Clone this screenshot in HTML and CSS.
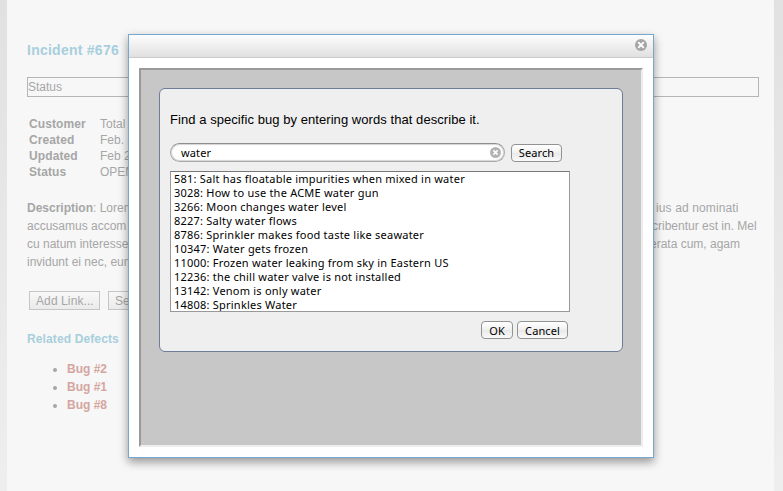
FILE: index.html
```
<!DOCTYPE html>
<html lang="en">
<head>
<meta charset="utf-8">
<title>Incident #676</title>
<link rel="stylesheet" href="styles.css">
</head>
<body>
<main class="page">
  <h1 class="title">Incident #676</h1>
  <div class="statusbar">Status</div>
  <dl class="facts">
    <dt>Customer</dt><dd>Total</dd>
    <dt>Created</dt><dd>Feb.</dd>
    <dt>Updated</dt><dd>Feb 2</dd>
    <dt>Status</dt><dd>OPEN</dd>
  </dl>
  <div class="description">
    <span><b>Description</b>: Lorem</span><span class="first-tail">ius ad nominati</span>
    <span>accusamus accom</span><span class="pull-s">scribentur est in. Mel</span>
    <span>cu natum interesse</span><span class="pull-e">erata cum, agam</span>
    <span>invidunt ei nec, eum</span>
  </div>
  <div class="actions"><button class="flat">Add Link...</button><button class="flat">Search</button></div>
  <h2 class="related">Related Defects</h2>
  <ul class="bugs"><li><b>Bug #2</b></li><li><b>Bug #1</b></li><li><b>Bug #8</b></li></ul>
</main>
<section class="modal">
  <header class="modal-head">
    <svg class="close" width="12" height="12" viewBox="0 0 12 12"><circle cx="6" cy="6" r="6" fill="#a6a6a6"/><path d="M3.7 3.7l4.6 4.6M8.3 3.7L3.7 8.3" stroke="#fff" stroke-width="1.9" stroke-linecap="round"/></svg>
  </header>
  <div class="frame">
    <div class="panel">
      <p class="prompt">Find a specific bug by entering words that describe it.</p>
      <div class="search">
        <div class="field"><span>water</span>
          <svg width="11" height="11" viewBox="0 0 11 11"><circle cx="5.5" cy="5.5" r="5.5" fill="#b3b3b3"/><path d="M3.4 3.4l4.2 4.2M7.6 3.4L3.4 7.6" stroke="#fff" stroke-width="1.5"/></svg>
        </div>
        <button class="btn search-btn">Search</button>
      </div>
      <div class="results">
        <div>581: Salt has floatable impurities when mixed in water</div>
        <div>3028: How to use the ACME water gun</div>
        <div>3266: Moon changes water level</div>
        <div>8227: Salty water flows</div>
        <div>8786: Sprinkler makes food taste like seawater</div>
        <div>10347: Water gets frozen</div>
        <div>11000: Frozen water leaking from sky in Eastern US</div>
        <div>12236: the chill water valve is not installed</div>
        <div>13142: Venom is only water</div>
        <div>14808: Sprinkles Water</div>
      </div>
      <div class="buttons"><button class="btn ok">OK</button><button class="btn cancel">Cancel</button></div>
    </div>
  </div>
</section>
</body>
</html>
```
FILE: styles.css
```
* { box-sizing: border-box; }
body {
  margin: 0;
  width: 783px;
  height: 491px;
  overflow: hidden;
  position: relative;
  background: linear-gradient(#e1e1e1, #eeeeee);
  font: 12px/18px "Liberation Sans", Arial, sans-serif;
  color: #a6a6a6;
}
.page {
  width: 767px;
  height: 491px;
  margin-left: 7px;
  padding: 41px 15px 0 20px;
  background: #f7f7f7;
}
.title { margin: 0; font-size: 14px; line-height: 18px; color: #a7cfdd; letter-spacing: .25px; }
.statusbar { margin-top: 18px; height: 20px; border: 1px solid #b5b5b5; line-height: 18px; }
.facts {
  display: grid;
  grid-template-columns: 71px 1fr;
  grid-auto-rows: 16px;
  margin: 19px 0 0 2px;
  line-height: 16px;
}
.facts dt { font-weight: bold; letter-spacing: .1px; }
.facts dd { margin: 0; }
.description {
  display: grid;
  grid-template-columns: 629px 1fr;
  grid-auto-rows: 18px;
  margin-top: 19px;
  white-space: nowrap;
}
.first-tail { letter-spacing: .12px; }
.pull-s { margin-left: -10px; }
.pull-e { margin-left: -6px; }
.actions { display: flex; gap: 8px; margin: 20px 0 0 2px; }
.flat {
  height: 19px;
  width: 71px;
  padding: 0 6px;
  border: 1px solid #c6c6c6;
  background: linear-gradient(#f8f8f8, #ebebeb);
  font: 12px/16px "Liberation Sans", Arial, sans-serif;
  letter-spacing: .1px;
  color: #a6a6a6;
  text-align: left;
  white-space: nowrap;
}
.related { margin: 20px 0 0; font-size: 12px; line-height: 18px; letter-spacing: .12px; color: #a7cfdd; }
.bugs { margin: 12px 0 0; padding-left: 40px; }
.bugs b { color: #d5a5a0; }
.modal {
  position: absolute;
  left: 128px;
  top: 34px;
  width: 526px;
  height: 424px;
  border: 1px solid #76a7cc;
  background: #fff;
  box-shadow: 0 4px 9px rgba(0, 0, 0, .4);
  color: #000;
}
.modal-head {
  display: flex;
  justify-content: flex-end;
  height: 23px;
  padding: 4px 6px 0 0;
  border-bottom: 1px solid #cbcbcb;
  background: linear-gradient(#fdfdfd, #e0e0e0);
}
.frame {
  height: 379px;
  margin: 10px;
  padding: 18px;
  border: 2px solid;
  border-color: #999 #eee #eee #999;
  background: #c7c7c7;
}
.panel {
  height: 264px;
  padding: 21px 10px 0;
  border: 1px solid #6f7c95;
  border-radius: 6px;
  background: #efefef;
}
.prompt { margin: 0; font-size: 13px; line-height: 20px; letter-spacing: .06px; white-space: nowrap; }
.search { display: flex; align-items: center; gap: 6px; margin-top: 13px; height: 19px; }
.field {
  display: flex;
  align-items: center;
  justify-content: space-between;
  width: 335px;
  height: 19px;
  padding: 0 3px 0 10px;
  border: 1px solid #aaa;
  border-top-color: #8e8e8e;
  border-radius: 10px;
  background: #fff;
  box-shadow: inset 0 0 1px 1px #d4d4d4;
  font: 11px/15px "Noto Sans", sans-serif;
  letter-spacing: .15px;
}
.btn {
  height: 18px;
  padding: 0;
  border: 1px solid #929292;
  border-radius: 4px;
  background: linear-gradient(#fff, #f0f0f0 50%, #e9e9e9 52%, #fafafa);
  font: 11px/15px "Noto Sans", sans-serif;
  letter-spacing: .1px;
  color: #000;
}
.search-btn { width: 51px; }
.results {
  width: 400px;
  height: 141px;
  margin-top: 9px;
  padding: 0 0 0 3px;
  border: 1px solid #999;
  border-top-color: #777;
  background: #fff;
  overflow: hidden;
  font: 11px/14px "Noto Sans", sans-serif;
  letter-spacing: .22px;
  white-space: nowrap;
}
.buttons { display: flex; justify-content: flex-end; gap: 4px; width: 398px; margin-top: 9px; }
.ok { width: 32px; line-height: 13px; }
.cancel { width: 51px; line-height: 13px; }
```
